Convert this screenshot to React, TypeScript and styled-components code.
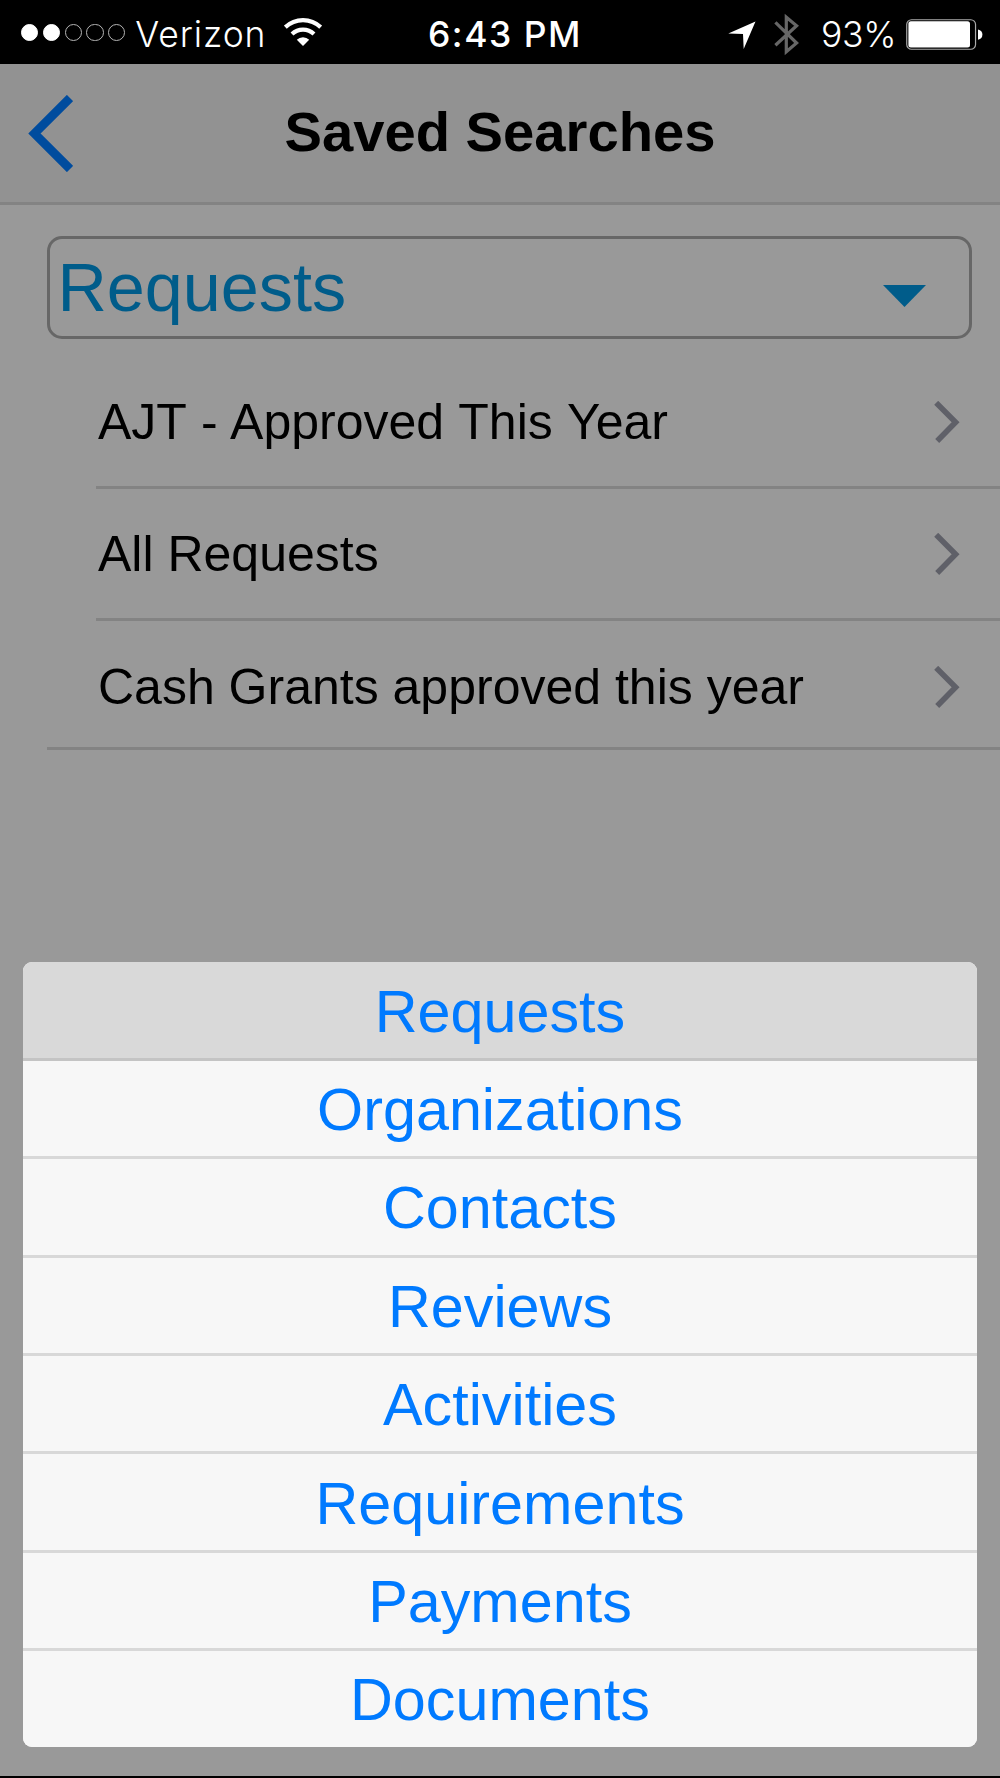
import React from 'react';
import styled, { createGlobalStyle } from 'styled-components';

const GlobalStyle = createGlobalStyle`
  *, *::before, *::after { box-sizing: border-box; }
  body { margin: 0; background: #000; }
  button { border: 0; margin: 0; padding: 0; background: none; font: inherit; color: inherit; }
`;

const Screen = styled.div`
  width: 1000px;
  height: 1778px;
  display: flex;
  flex-direction: column;
  overflow: hidden;
  background: #000;
  color: #000;
  font-family: 'Liberation Sans', Arial, sans-serif;
`;

const StatusBar = styled.header`
  flex: none;
  height: 63.5px;
  display: grid;
  grid-template-columns: 428px 1fr auto;
  align-items: center;
  padding: 6px 17px 0 0;
  color: #fff;
  font: 400 35.5px/44px Inter, sans-serif;
  white-space: nowrap;
`;

const StatusGroup = styled.div`
  display: flex;
  align-items: center;
`;

const SignalDots = styled.div`
  display: flex;
  gap: 4.6px;
  margin: -5px 10px 0 21px;
`;

const Dot = styled.span<{ $on: boolean }>`
  width: 17.2px;
  height: 17.2px;
  border-radius: 50%;
  border: 1px solid ${(p) => (p.$on ? '#fff' : '#b5b5b5')};
  background: ${(p) => (p.$on ? '#fff' : 'transparent')};
`;

const Carrier = styled.span`
  width: 149px;
  font-weight: 350;
  letter-spacing: 0.9px;
`;

const Clock = styled.time`
  font-weight: 500;
  letter-spacing: 1.5px;
`;

const BatteryLevel = styled.span`
  margin: 0 10px 0 22px;
  font-weight: 350;
  letter-spacing: -0.4px;
`;

const Page = styled.main`
  position: relative;
  flex: none;
  height: 1712.7px;
  display: flex;
  flex-direction: column;
  background: #999;
`;

const NavBar = styled.nav`
  flex: none;
  height: 141px;
  padding-top: 2px;
  display: grid;
  grid-template-columns: 100px 1fr 100px;
  align-items: center;
  background: #929292;
  border-bottom: 3px solid #838383;
`;

const BackButton = styled.button`
  display: flex;
  padding-left: 28px;
`;

const Title = styled.h1`
  margin: 0;
  text-align: center;
  font-size: 56.2px;
  line-height: 64px;
  font-weight: 700;
  padding-bottom: 3px;
`;

const Select = styled.button`
  flex: none;
  height: 102.5px;
  margin: 31.5px 28.5px 0 47px;
  padding: 0 43px 0 7.5px;
  display: flex;
  align-items: center;
  justify-content: space-between;
  border: 3px solid #676767;
  border-radius: 15px;
  color: #005c8a;
  font-size: 68.3px;
  line-height: 76px;
`;

const List = styled.ul`
  margin: 0 0 0 47px;
  padding: 18px 0 0;
  list-style: none;
  border-bottom: 3px solid #838383;
`;

const ListRow = styled.li<{ $wordSpacing?: number }>`
  height: 132.3px;
  margin-left: 48.5px;
  padding: 2px 40px 0 2.5px;
  display: flex;
  align-items: center;
  justify-content: space-between;
  border-bottom: 3px solid #838383;
  font-size: 50px;
  line-height: 58px;
  word-spacing: ${(p) => p.$wordSpacing ?? 0}px;

  &:last-child {
    height: 126px;
    padding-top: 5px;
    border-bottom: 0;
  }
`;

const ActionSheet = styled.div`
  position: absolute;
  left: 23.3px;
  right: 23.3px;
  bottom: 29.7px;
  display: flex;
  flex-direction: column;
  overflow: hidden;
  border-radius: 9px;
  background: #f7f7f7;
`;

const SheetOption = styled.button<{ $selected: boolean }>`
  height: 98.4px;
  padding-top: 3px;
  border-bottom: 3px solid ${(p) => (p.$selected ? '#c4c4c4' : '#d8d8d8')};
  background: ${(p) => (p.$selected ? '#d9d9d9' : '#f7f7f7')};
  color: #007aff;
  font-size: 59.3px;
  line-height: 66px;
  text-align: center;

  &:last-child {
    height: 95.4px;
    border-bottom: 0;
  }
`;

const Wifi = styled.svg`
  margin-top: -5px;
`;

const Location = styled.svg`
  margin-right: 18px;
`;

const Caret = styled.svg`
  margin-top: 17px;
`;

const WifiIcon = () => (
  <Wifi width="38" height="30" viewBox="0 0 38 30">
    <g fill="none" stroke="#fff" strokeWidth="4.2">
      <path d="M1.3 10.2a25.5 25.5 0 0 1 35.4 0" />
      <path d="M8 17a16 16 0 0 1 22 0" />
    </g>
    <path d="M19 29l-6.2-6.3a8.9 8.9 0 0 1 12.4 0z" fill="#fff" />
  </Wifi>
);

const LocationIcon = () => (
  <Location width="28" height="28" viewBox="0 0 28 28">
    <path d="M27.5.5L15.7 28 15 13 .3 12.4z" fill="#fff" />
  </Location>
);

const BluetoothIcon = () => (
  <svg width="25" height="43" viewBox="0 0 25 43">
    <path
      d="M1.4 9.4L22.6 30 12.3 38.8V4.2L22.6 12.8 1.4 32.2"
      fill="none"
      stroke="#666"
      strokeWidth="3.2"
    />
  </svg>
);

const BatteryIcon = () => (
  <svg width="77" height="32" viewBox="0 0 77 32">
    <rect x=".75" y=".75" width="68.8" height="29.5" rx="4.8" fill="none" stroke="#aaa" strokeWidth="1.2" />
    <rect x="2.4" y="2.2" width="61.6" height="26.4" rx="2.5" fill="#fff" />
    <path d="M72 10.4q4.4.8 4.4 5.2t-4.4 5.2z" fill="#fff" />
  </svg>
);

const BackIcon = () => (
  <svg width="45" height="77" viewBox="0 0 45 77">
    <path d="M42 3L6.5 38.5 42 74" fill="none" stroke="#004c9e" strokeWidth="8.8" />
  </svg>
);

const CaretIcon = () => (
  <Caret width="43" height="22" viewBox="0 0 43 22">
    <path d="M0 0h43L21.5 22z" fill="#005c8a" />
  </Caret>
);

const ChevronIcon = () => (
  <svg width="26" height="42" viewBox="0 0 26 42">
    <path d="M2.2 1.8L21.6 21.2 3.2 40" fill="none" stroke="#5f6068" strokeWidth="5.6" />
  </svg>
);

const searches = [
  { name: 'AJT - Approved This Year', wordSpacing: 1.2 },
  { name: 'All Requests' },
  { name: 'Cash Grants approved this year' },
];
const options = [
  'Requests',
  'Organizations',
  'Contacts',
  'Reviews',
  'Activities',
  'Requirements',
  'Payments',
  'Documents',
];
const current = 'Requests';

export default function App() {
  return (
    <Screen>
      <GlobalStyle />
      <StatusBar>
        <StatusGroup>
          <SignalDots>
            {[1, 2, 3, 4, 5].map((n) => (
              <Dot key={n} $on={n <= 2} />
            ))}
          </SignalDots>
          <Carrier>Verizon</Carrier>
          <WifiIcon />
        </StatusGroup>
        <Clock>6:43 PM</Clock>
        <StatusGroup>
          <LocationIcon />
          <BluetoothIcon />
          <BatteryLevel>93%</BatteryLevel>
          <BatteryIcon />
        </StatusGroup>
      </StatusBar>
      <Page>
        <NavBar>
          <BackButton aria-label="Back">
            <BackIcon />
          </BackButton>
          <Title>Saved Searches</Title>
        </NavBar>
        <Select>
          {current}
          <CaretIcon />
        </Select>
        <List>
          {searches.map(({ name, wordSpacing }) => (
            <ListRow key={name} $wordSpacing={wordSpacing}>
              {name}
              <ChevronIcon />
            </ListRow>
          ))}
        </List>
        <ActionSheet>
          {options.map((name) => (
            <SheetOption key={name} $selected={name === current}>
              {name}
            </SheetOption>
          ))}
        </ActionSheet>
      </Page>
    </Screen>
  );
}
